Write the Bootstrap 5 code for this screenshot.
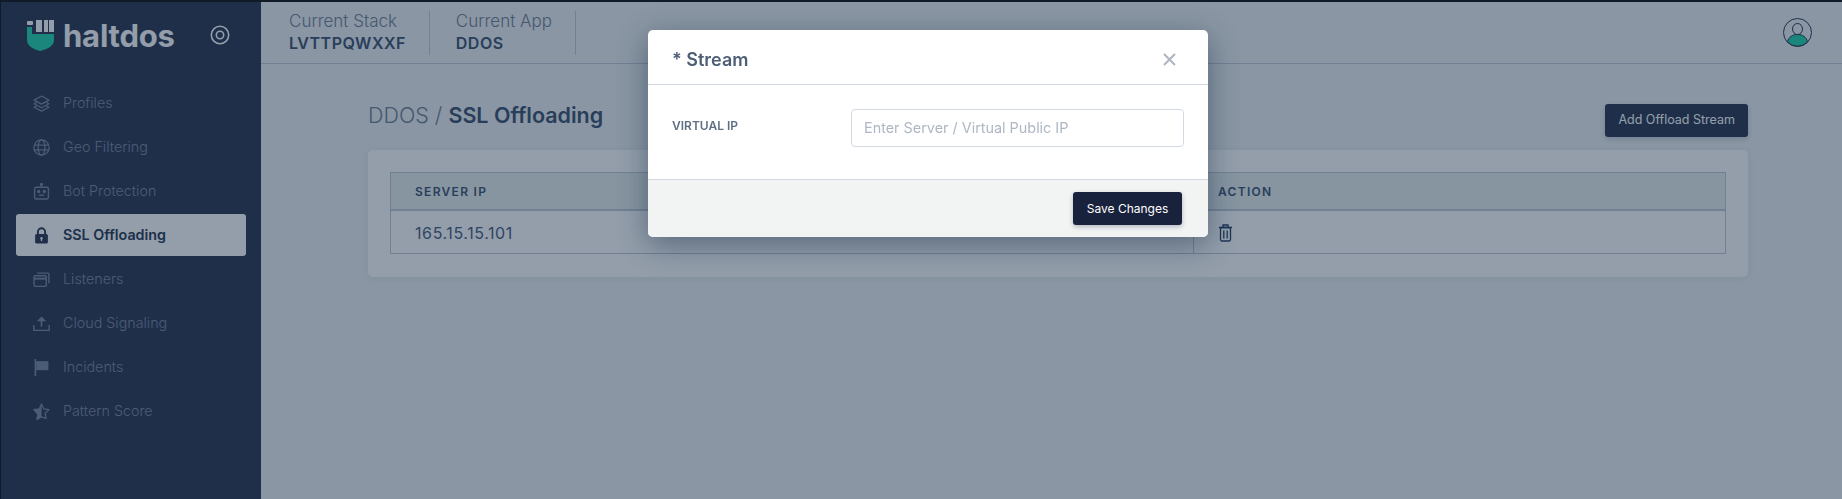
<!DOCTYPE html>
<html lang="en">
<head>
    <meta charset="UTF-8">
    <title>Haltdos - SSL Offloading</title>
    <link href="https://cdn.jsdelivr.net/npm/bootstrap@5.3.0/dist/css/bootstrap.min.css" rel="stylesheet">
    <style>
        html, body { height: 100%; }
        body {
            font-family: Inter, "Noto Sans", sans-serif;
            background: #eef0f2;
            border-top: 2px solid #111;
            border-left: 1px solid #111;
            color: #2c3550;
            overflow: hidden;
        }
        .app-shell { height: 100%; }
        /* sidebar */
        .side-panel { width: 260px; flex: none; background: #2c3550; }
        .brand-row { height: 66px; padding: 0 31px 0 25px; }
        .brand-name { font-size: 31px; font-weight: 700; color: #fff; letter-spacing: -.2px; margin-left: 8px; line-height: 1; }
        .brand-target { margin-left: auto; }
        .side-menu { padding: 14px 15px 0 15px; gap: 2px; }
        .side-item {
            height: 42px; padding-left: 17px; border-radius: 3px;
            font-size: 14.3px; font-weight: 300; color: #7d87a0; text-decoration: none; gap: 13px;
        }
        .side-item svg { width: 17px; height: 17px; flex: none; }
        .side-item.is-active { background: #fff; color: #2c3550; font-weight: 600; }
        /* top bar */
        .top-strip { height: 62px; border-bottom: 1px solid #c2c8d5; padding-left: 28px; padding-right: 30px; }
        .stack-box { height: 44px; padding-right: 23px; margin-right: 26px; border-right: 1px solid #c2c8d5; }
        .stack-label { font-size: 17px; font-weight: 300; color: #747f97; line-height: 20px; }
        .stack-value { font-size: 16px; font-weight: 600; color: #3d5170; line-height: 25px; letter-spacing: .5px; }
        /* page */
        .page-body { padding: 39px 94px 0 107px; }
        .page-title { font-size: 21.5px; font-weight: 300; color: #747f97; margin: 0 0 9px 0; }
        .page-title b { font-weight: 600; color: #3d5170; }
        .dark-btn { background: #2c3550; color: #fff; font-size: 12.5px; border: 0; border-radius: 3px; height: 33px; padding: 0 13px; box-shadow: 0 2px 5px rgba(31,47,74,.2); }
        .white-panel { background: #fff; border-radius: 5px; padding: 22px 22px 23px 22px; margin-top: 12px; box-shadow: 0 1px 8px rgba(31,47,74,.06); }
        .ip-table { margin: 0; border-color: #c2c8d5; }
        .ip-table th {
            background: #e9eeee; color: #3d5170; font-size: 12px; font-weight: 600; letter-spacing: 1.3px;
            height: 38px; padding: 1px 0 0 24px; vertical-align: middle; border-bottom-width: 2px; border-color: #c2c8d5;
        }
        .ip-table td { height: 43px; padding: 1px 0 0 24px; vertical-align: middle; font-size: 16px; letter-spacing: .6px; color: #495b7c; background: #fff; border-color: #c2c8d5; }
        .ip-table .action-col { width: 532px; }
        .ip-table td svg { display: block; }
        /* modal over the page */
        .dim-layer { background: #102843; }
        .dim-layer.show { opacity: .45; }
        .stream-dialog { max-width: 560px; margin: 30px 0 0 648px; }
        .stream-dialog .modal-content { border: 0; border-radius: 5px; box-shadow: 0 8px 30px rgba(16,40,67,.45); }
        .stream-dialog .modal-header { height: 55px; padding: 5px 32px 0 24px; border-bottom: 1px solid #d3d9e1; }
        .stream-dialog .modal-title { font-size: 18px; font-weight: 600; color: #4d5f75; }
        .stream-dialog .modal-body { padding: 24px 24px 0 24px; height: 94px; }
        .field-label { width: 179px; flex: none; font-size: 12px; font-weight: 600; color: #5f7085; padding-top: 9px; line-height: 16px; }
        .stream-input { height: 38px; border: 1px solid #d3d9e1; border-radius: 4px; font-size: 14.4px; padding: 0 12px 2px 12px; }
        .stream-input::placeholder { color: #aeb7c3; }
        .stream-dialog .modal-footer { height: 58px; padding: 0 26px 0 0; background: #f2f4f4; border-top: 1px solid #d3d9e1; border-radius: 0 0 5px 5px; }
        .save-btn { background: #18223c; color: #fff; font-size: 12px; border: 0; border-radius: 3px; height: 33px; width: 109px; margin: 0; padding: 0; box-shadow: 0 2px 5px rgba(31,47,74,.3); }
        .close-x { background: none; border: 0; padding: 0; line-height: 0; }
    </style>
</head>
<body>
    <div class="app-shell d-flex">
        <aside class="side-panel d-flex flex-column">
            <div class="brand-row d-flex align-items-center">
                <svg width="29" height="31" viewBox="0 0 29 31">
                    <path d="M1 7h5v7h22v6c0 6-6 9-14 11C7 29 1 26 1 20z" fill="#24d3ab"/>
                    <rect x="1" y="1" width="6" height="4" rx="1" fill="#fff"/>
                    <rect x="10" y="0" width="6" height="12" fill="#fff"/>
                    <rect x="18" y="0" width="4" height="12" fill="#fff"/>
                    <rect x="23" y="0" width="5" height="12" fill="#fff"/>
                </svg>
                <span class="brand-name">haltdos</span>
                <svg class="brand-target" width="20" height="20" viewBox="0 0 20 20" fill="none" stroke="#fff" stroke-width="1.600">
                    <circle cx="10" cy="10" r="8.700"/><circle cx="10" cy="10" r="3.700"/>
                </svg>
            </div>
            <nav class="side-menu d-flex flex-column">
                <a class="side-item d-flex align-items-center" href="#">
                    <svg viewBox="0 0 16 16" fill="none" stroke="currentColor" stroke-width="1.200" stroke-linejoin="round"><path d="M8 1 15 4.800 8 8.600 1 4.800z"/><path d="M3.500 6.800 1 8.200l7 3.800 7-3.800-2.500-1.400"/><path d="M3.500 10.200 1 11.500 8 15.200l7-3.700-2.500-1.300"/></svg>
                    Profiles
                </a>
                <a class="side-item d-flex align-items-center" href="#">
                    <svg viewBox="0 0 16 16" fill="none" stroke="currentColor" stroke-width="1.200"><circle cx="8" cy="8" r="7.200"/><ellipse cx="8" cy="8" rx="3.200" ry="7.200"/><path d="M1 5.700h14M1 10.300h14"/></svg>
                    Geo Filtering
                </a>
                <a class="side-item d-flex align-items-center" href="#">
                    <svg viewBox="0 0 16 16" fill="none" stroke="currentColor" stroke-width="1.300"><rect x="1.500" y="4" width="13" height="11" rx="1.500"/><path d="M8 4V1.500"/><circle cx="8" cy="1.300" r=".8" fill="currentColor"/><circle cx="5.400" cy="8" r=".9" fill="currentColor"/><circle cx="10.600" cy="8" r=".9" fill="currentColor"/><path d="M5.500 11.500h5"/></svg>
                    Bot Protection
                </a>
                <a class="side-item is-active d-flex align-items-center" href="#">
                    <svg viewBox="0 0 16 16"><path fill="none" stroke="currentColor" stroke-width="1.800" d="M4.600 7V4.600a3.400 3.400 0 0 1 6.800 0V7"/><path fill="currentColor" fill-rule="evenodd" d="M3.500 6.500h9A1.500 1.500 0 0 1 14 8v6a1.500 1.500 0 0 1-1.500 1.500h-9A1.500 1.500 0 0 1 2 14V8a1.500 1.500 0 0 1 1.500-1.500zM8 9.300a1.300 1.300 0 0 0-.6 2.400v1.500h1.200v-1.500A1.300 1.300 0 0 0 8 9.300z"/></svg>
                    SSL Offloading
                </a>
                <a class="side-item d-flex align-items-center" href="#">
                    <svg viewBox="0 0 16 16" fill="none" stroke="currentColor" stroke-width="1.300"><rect x="1" y="4.500" width="11.500" height="10" rx="1"/><path d="M1 7.200h11.500" stroke-width="1.800"/><path d="M4 2h10a1 1 0 0 1 1 1v8.500"/></svg>
                    Listeners
                </a>
                <a class="side-item d-flex align-items-center" href="#">
                    <svg viewBox="0 0 16 16" fill="none" stroke="currentColor" stroke-width="1.300"><path d="M.8 9.500v5h14.400v-5"/><path d="M8 11V3" stroke-width="1.600"/><path d="M5 5.300 8 2.300l3 3z" fill="currentColor"/></svg>
                    Cloud Signaling
                </a>
                <a class="side-item d-flex align-items-center" href="#">
                    <svg viewBox="0 0 16 16"><rect x="1.500" y="0" width="1.500" height="16" fill="currentColor"/><rect x="3" y="2" width="11.500" height="8.500" fill="currentColor"/></svg>
                    Incidents
                </a>
                <a class="side-item d-flex align-items-center" href="#">
                    <svg viewBox="0 0 16 16"><path fill="none" stroke="currentColor" stroke-width="1.200" stroke-linejoin="round" d="M8 1l2.100 4.600 5 .6-3.700 3.400 1 4.900L8 13.100 3.600 15.500l1-4.900L.9 6.200l5-.6z"/><path fill="currentColor" d="M8 1v12.100L3.600 15.500l1-4.900L.9 6.200l5-.6z"/></svg>
                    Pattern Score
                </a>
            </nav>
        </aside>

        <main class="flex-grow-1">
            <header class="top-strip d-flex align-items-center">
                <div class="stack-box">
                    <div class="stack-label">Current Stack</div>
                    <div class="stack-value">LVTTPQWXXF</div>
                </div>
                <div class="stack-box">
                    <div class="stack-label">Current App</div>
                    <div class="stack-value">DDOS</div>
                </div>
                <svg class="ms-auto" width="29" height="29" viewBox="0 0 29 29" fill="none" stroke="#2c3550" stroke-width="1">
                    <circle cx="14.500" cy="14.500" r="14"/>
                    <ellipse cx="14.500" cy="11" rx="5" ry="5.500"/>
                    <path d="M4.500 24c1-5 5-7.500 10-7.500s9 2.500 10 7.500a14 14 0 0 1-20 0z" fill="#24d3ab"/>
                </svg>
            </header>
            <section class="page-body">
                <div class="d-flex justify-content-between align-items-center">
                    <h1 class="page-title">DDOS / <b>SSL Offloading</b></h1>
                    <button class="dark-btn" type="button">Add Offload Stream</button>
                </div>
                <div class="white-panel">
                    <table class="table table-bordered ip-table">
                        <thead>
                            <tr><th>SERVER IP</th><th class="action-col">ACTION</th></tr>
                        </thead>
                        <tbody>
                            <tr>
                                <td>165.15.15.101</td>
                                <td>
                                    <svg width="15" height="18" viewBox="0 0 15 18" fill="none" stroke="#2a3e62" stroke-width="1.300"><path d="M1 3.500h13M5 3.500V1h5v2.500"/><rect x="2.500" y="3.500" width="10" height="13.500" rx="1.500"/><path d="M5.800 6.500v8M9.200 6.500v8"/></svg>
                                </td>
                            </tr>
                        </tbody>
                    </table>
                </div>
            </section>
        </main>
    </div>

    <div class="modal-backdrop dim-layer show"></div>
    <div class="modal d-block" tabindex="-1">
        <div class="modal-dialog stream-dialog">
            <div class="modal-content">
                <div class="modal-header d-flex justify-content-between align-items-center">
                    <h5 class="modal-title">* Stream</h5>
                    <button class="close-x" type="button" aria-label="Close">
                        <svg width="13" height="13" viewBox="0 0 13 13" stroke="#adb5c1" stroke-width="2"><path d="M1 1l11 11M12 1 1 12"/></svg>
                    </button>
                </div>
                <div class="modal-body d-flex">
                    <label class="field-label" for="virtualIp">VIRTUAL IP</label>
                    <input id="virtualIp" class="form-control stream-input" type="text" placeholder="Enter Server / Virtual Public IP">
                </div>
                <div class="modal-footer">
                    <button class="save-btn" type="button">Save Changes</button>
                </div>
            </div>
        </div>
    </div>

    <script src="https://cdn.jsdelivr.net/npm/bootstrap@5.3.0/dist/js/bootstrap.bundle.min.js"></script>
</body>
</html>
